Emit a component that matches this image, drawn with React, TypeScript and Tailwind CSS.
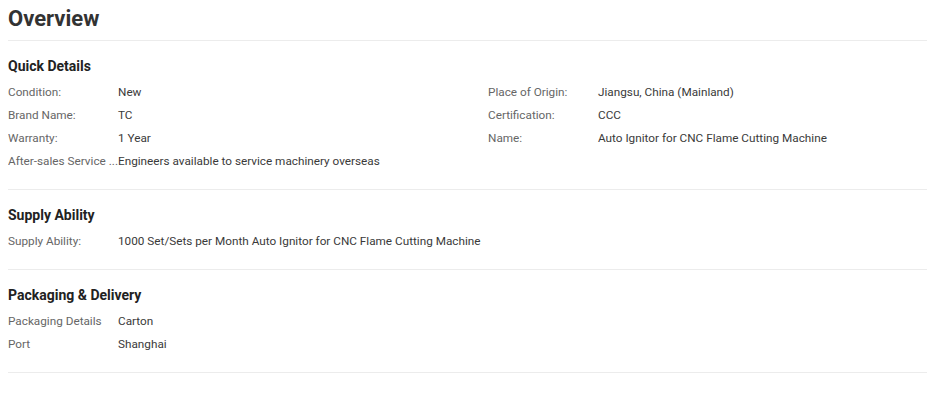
import React from "react";

type Row = [string, string];

function Field({ label, value }: { label: string; value: string }) {
  return (
    <div className="flex h-[23px] items-center text-[11.75px] leading-[23px]">
      <div className="w-[110px] shrink-0 overflow-hidden whitespace-nowrap text-[#666]">{label}</div>
      <div className="text-[#3a3a3a] whitespace-nowrap">{value}</div>
    </div>
  );
}

function Section({ title, children }: { title: string; children: React.ReactNode }) {
  return (
    <div className="border-b border-[#ececec] pt-[15px] pb-[16px]">
      <h3 className="text-[14px] font-bold leading-[20px] text-[#222]">{title}</h3>
      <div className="mt-[5px]">{children}</div>
    </div>
  );
}

export default function App() {
  const left: Row[] = [
    ["Condition:", "New"],
    ["Brand Name:", "TC"],
    ["Warranty:", "1 Year"],
    ["After-sales Service ...", "Engineers available to service machinery overseas"],
  ];
  const right: Row[] = [
    ["Place of Origin:", "Jiangsu, China (Mainland)"],
    ["Certification:", "CCC"],
    ["Name:", "Auto Ignitor for CNC Flame Cutting Machine"],
  ];
  return (
    <div
      className="min-h-[403px] w-[931px] bg-white pl-[8px] pr-[4px]"
      style={{ fontFamily: "Roboto, 'Liberation Sans', Arial, sans-serif" }}
    >
      <div className="border-b border-[#ececec] pt-[4px] pb-[6px]">
        <h2 className="text-[22px] font-bold leading-[30px] text-[#333]">Overview</h2>
      </div>
      <Section title="Quick Details">
        <div className="grid grid-cols-[480px_1fr]">
          <div>
            {left.map(([l, v]) => (
              <Field key={l} label={l} value={v} />
            ))}
          </div>
          <div>
            {right.map(([l, v]) => (
              <Field key={l} label={l} value={v} />
            ))}
          </div>
        </div>
      </Section>
      <Section title="Supply Ability">
        <Field
          label="Supply Ability:"
          value="1000 Set/Sets per Month Auto Ignitor for CNC Flame Cutting Machine"
        />
      </Section>
      <Section title="Packaging & Delivery">
        <Field label="Packaging Details" value="Carton" />
        <Field label="Port" value="Shanghai" />
      </Section>
    </div>
  );
}
